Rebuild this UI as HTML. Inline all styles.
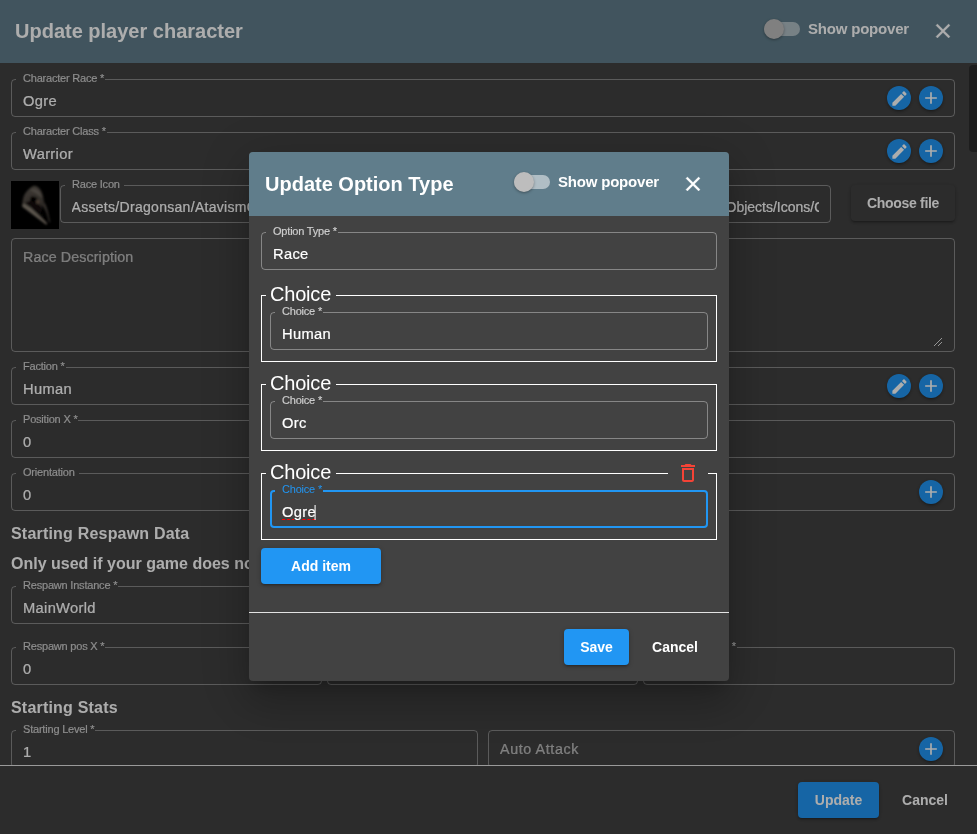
<!DOCTYPE html>
<html lang="en">
<head>
<meta charset="utf-8">
<title>Update player character</title>
<style>
*{box-sizing:border-box;margin:0;padding:0}
html,body{width:977px;height:834px;overflow:hidden;background:#424242;font-family:"Liberation Sans",sans-serif;color:#fff}
#dlg{will-change:transform;position:absolute;left:0;top:0;width:977px;height:834px;background:#424242;overflow:hidden}
.hdr{position:absolute;left:0;top:0;width:977px;height:63px;background:#607d8b}
.title{position:absolute;left:15px;top:0;height:63px;line-height:63px;font-size:20px;font-weight:bold;white-space:nowrap}
.tog{position:absolute;width:36px;height:14px;border-radius:7px;background:rgba(255,255,255,.5)}
.tog i{position:absolute;left:0;top:-3px;width:20px;height:20px;border-radius:50%;background:#bdbdbd;box-shadow:0 1px 3px rgba(0,0,0,.35)}
.toglbl{position:absolute;font-size:15px;font-weight:bold;white-space:nowrap;letter-spacing:-.2px;line-height:20px}
.x{position:absolute;width:24px;height:24px}
.x svg{display:block}
/* outlined field */
.f{position:absolute;height:38px;border:1px solid rgba(255,255,255,.36);border-radius:4px}
.f>label{-webkit-text-stroke:.15px;position:absolute;left:4px;top:-9px;letter-spacing:-.2px;height:14px;line-height:14px;padding:0 1px 0 7px;background:#424242;font-size:11px;color:rgba(255,255,255,.7);white-space:nowrap}
.f>span{position:absolute;left:11px;top:11px;line-height:20px;font-size:14px;white-space:nowrap;-webkit-text-stroke:.2px;letter-spacing:.3px;transform:scaleX(1.05);transform-origin:0 50%}
.f>span.clip{transform:none}
.f>span.ph{color:rgba(255,255,255,.6);letter-spacing:.1px;transform:scaleX(1.02)}
.f>label.o{padding-right:4px}
.rb{position:absolute;width:24px;height:24px;border-radius:50%;background:#2196f3;box-shadow:0 1px 5px rgba(0,0,0,.2),0 2px 2px rgba(0,0,0,.14),0 3px 1px -2px rgba(0,0,0,.12)}
.rb svg{display:block;margin:2px}
.h{position:absolute;left:11px;font-size:16px;font-weight:bold;white-space:nowrap;line-height:20px;letter-spacing:.2px}
.btn{position:absolute;height:36px;border-radius:4px;font-size:14px;font-weight:bold;line-height:36px;text-align:center;white-space:nowrap}
.btn.p{background:#2196f3;box-shadow:0 1px 5px rgba(0,0,0,.2),0 2px 2px rgba(0,0,0,.14),0 3px 1px -2px rgba(0,0,0,.12)}
.sep{position:absolute;height:1px;background:rgba(255,255,255,.85)}
#scrim{position:absolute;left:0;top:0;width:977px;height:834px;background:rgba(0,0,0,.32)}
#modal{will-change:transform;position:absolute;left:249px;top:152px;width:480px;height:529px;background:#424242;border-radius:4px;overflow:hidden;box-shadow:0 11px 15px -7px rgba(0,0,0,.2),0 24px 38px 3px rgba(0,0,0,.14),0 9px 46px 8px rgba(0,0,0,.12)}
#modal .hdr{width:480px;height:64px}
#modal .title{left:16px;height:64px;line-height:65px}
.grp{position:absolute;left:12px;width:456px;height:67px;border:1px solid #fff}
.grp>b{position:absolute;left:4px;top:-15px;height:26px;line-height:26px;padding:0 5px 0 4px;background:#424242;font-size:20px;font-weight:normal;letter-spacing:-.2px}
.grp .f{left:8px;top:16px;width:438px}
.f.foc{border:2px solid #2196f3}
.f.foc>label{-webkit-text-stroke:0;color:#2196f3;left:3px;top:-10px}
.f.foc>span{left:10px;top:10px}

.ico{position:absolute;width:48px;height:48px;background:#000;overflow:hidden}
.clip{overflow:hidden;right:11px;text-overflow:clip}
.btn.cf{letter-spacing:-.3px;background:#424242;box-shadow:0 1px 5px rgba(0,0,0,.2),0 2px 2px rgba(0,0,0,.14),0 3px 1px -2px rgba(0,0,0,.12)}
.f.ta>span{top:8px}
.f.ta>em{position:absolute;right:12px;bottom:5px;width:9px;height:9px;background:linear-gradient(135deg,transparent 0 50%,#ddd 50% 58%,transparent 58% 75%,#ddd 75% 83%,transparent 83%)}
.sb{position:absolute;left:969px;top:65px;width:8px;height:87px;background:#2c2c2c;border-radius:4px 0 0 4px}
.del{position:absolute;width:40px;height:24px;padding:0 8px;background:#424242}
.del svg{display:block}
.f u{text-decoration:underline dashed #f00 1px;text-underline-offset:2px}
.caret{display:inline-block;width:1px;height:15px;background:#fff;vertical-align:-3px;margin-left:-1px}
#content{position:absolute;left:0;top:0;width:977px;height:765px;overflow:hidden}
</style>
</head>
<body>
<div id="dlg">
  <div class="hdr">
    <div class="title">Update player character</div>
    <div class="tog" style="left:764px;top:22px"><i></i></div>
    <div class="toglbl" style="left:808px;top:19px">Show popover</div>
    <div class="x" style="left:931px;top:19px"><svg width="24" height="24" viewBox="0 0 24 24"><path fill="#fff" stroke="#fff" stroke-width=".35" d="M19 6.41L17.59 5 12 10.59 6.41 5 5 6.41 10.59 12 5 17.59 6.41 19 12 13.41 17.59 19 19 17.59 13.41 12z"/></svg></div>
  </div>
  <div id="content">
    <div class="f" style="left:11px;top:79px;width:944px;"><label>Character Race *</label><span>Ogre</span></div>
    <div class="rb" style="left:887px;top:86px"><svg width="19" height="19" style="margin:2.500px" viewBox="0 0 24 24"><path fill="#fff" d="M3 17.25V21h3.75L17.81 9.94l-3.75-3.75L3 17.25zM20.71 7.04c.39-.39.39-1.02 0-1.41l-2.34-2.34c-.39-.39-1.02-.39-1.41 0l-1.83 1.83 3.75 3.75 1.83-1.83z"/></svg></div>
    <div class="rb" style="left:919px;top:86px"><svg width="20" height="20" viewBox="0 0 24 24"><path fill="#fff" d="M19 13h-6v6h-2v-6H5v-2h6V5h2v6h6v2z"/></svg></div>
    <div class="f" style="left:11px;top:132px;width:944px;"><label>Character Class *</label><span>Warrior</span></div>
    <div class="rb" style="left:887px;top:139px"><svg width="19" height="19" style="margin:2.500px" viewBox="0 0 24 24"><path fill="#fff" d="M3 17.25V21h3.75L17.81 9.94l-3.75-3.75L3 17.25zM20.71 7.04c.39-.39.39-1.02 0-1.41l-2.34-2.34c-.39-.39-1.02-.39-1.41 0l-1.83 1.83 3.75 3.75 1.83-1.83z"/></svg></div>
    <div class="rb" style="left:919px;top:139px"><svg width="20" height="20" viewBox="0 0 24 24"><path fill="#fff" d="M19 13h-6v6h-2v-6H5v-2h6V5h2v6h6v2z"/></svg></div>
    <div class="ico" style="left:11px;top:181px"><svg width="48" height="48" viewBox="0 0 48 48"><defs><linearGradient id="hg" x1="0" y1="0" x2="0.300" y2="1"><stop offset="0" stop-color="#5d5750"/><stop offset=".55" stop-color="#4a443d"/><stop offset="1" stop-color="#262320"/></linearGradient><filter id="bl" x="-20%" y="-20%" width="140%" height="140%"><feGaussianBlur stdDeviation=".8"/></filter></defs><rect width="48" height="48" fill="#000"/><g filter="url(#bl)"><path d="M22.800 4.700C20 5.500 16 9.500 13.800 13 12 16 11.300 21 11.100 25.600L35.300 43.800 36.200 42.500 29 31 33 21.400C32.500 16 31.500 12 30 9.500 28 6 25.500 4.500 22.800 4.700z" fill="url(#hg)"/><path d="M14 22L20 19 28 23 31 27 30 33z" fill="#14110f"/><path d="M15 24L29 31 36 42.500 24 33z" fill="#0b0a09"/><path d="M11.100 25.600L12.200 22.600 20 27 36.200 42.500 35.300 43.800z" fill="#8a8175"/><path d="M19 9C22 6.500 27 7.500 30 13L31 17 26 13z" fill="#6d665e"/><ellipse cx="22.800" cy="18.300" rx="3.800" ry="2.700" fill="#050403" transform="rotate(25 22.800 18.300)"/><ellipse cx="26.800" cy="20.700" rx="1.600" ry="2.200" fill="#6b5648" transform="rotate(-20 26.800 20.700)"/><path d="M32.500 20.500C35.500 23 37 30 39.300 41.600L38 41.300C36.500 34 35 29.500 32 25.500z" fill="#4d4741"/></g></svg></div>
    <div class="f" style="left:60px;top:185px;width:771px"><label class="o">Race Icon</label><span class="clip" style="left:10.500px">Assets/Dragonsan/AtavismObjects/Races/Ogre/Resources/</span><span class="clip" style="left:664.500px;letter-spacing:0">Objects/Icons/Ogre.png</span></div>
    <div class="btn cf" style="left:851px;top:185px;width:104px">Choose file</div>
    <div class="f ta" style="left:11px;top:238px;width:944px;height:114px"><span class="ph">Race Description</span><em></em></div>
    <div class="f" style="left:11px;top:367px;width:944px;"><label>Faction *</label><span>Human</span></div>
    <div class="rb" style="left:887px;top:374px"><svg width="19" height="19" style="margin:2.500px" viewBox="0 0 24 24"><path fill="#fff" d="M3 17.25V21h3.75L17.81 9.94l-3.75-3.75L3 17.25zM20.71 7.04c.39-.39.39-1.02 0-1.41l-2.34-2.34c-.39-.39-1.02-.39-1.41 0l-1.83 1.83 3.75 3.75 1.83-1.83z"/></svg></div>
    <div class="rb" style="left:919px;top:374px"><svg width="20" height="20" viewBox="0 0 24 24"><path fill="#fff" d="M19 13h-6v6h-2v-6H5v-2h6V5h2v6h6v2z"/></svg></div>
    <div class="f" style="left:11px;top:420px;width:311px;"><label>Position X *</label><span>0</span></div>
    <div class="f" style="left:327px;top:420px;width:311px;"><label>Position Y *</label><span>0</span></div>
    <div class="f" style="left:643px;top:420px;width:312px;"><label>Position Z *</label><span>0</span></div>
    <div class="f" style="left:11px;top:473px;width:467px;"><label class=o>Orientation</label><span>0</span></div>
    <div class="f" style="left:488px;top:473px;width:467px;"><label>Starting Instance *</label><span>MainWorld</span></div>
    <div class="rb" style="left:919px;top:480px"><svg width="20" height="20" viewBox="0 0 24 24"><path fill="#fff" d="M19 13h-6v6h-2v-6H5v-2h6V5h2v6h6v2z"/></svg></div>
    <div class="h" style="top:524px">Starting Respawn Data</div>
    <div class="h" style="top:554px;letter-spacing:0">Only used if your game does not use the Atavism instance system</div>
    <div class="f" style="left:11px;top:586px;width:467px;"><label>Respawn Instance *</label><span>MainWorld</span></div>
    <div class="f" style="left:11px;top:647px;width:311px;"><label>Respawn pos X *</label><span>0</span></div>
    <div class="f" style="left:327px;top:647px;width:311px;"><label>Respawn pos Y *</label><span>0</span></div>
    <div class="f" style="left:643px;top:647px;width:312px;"><label>Respawn pos Z *</label><span>0</span></div>
    <div class="h" style="top:698px">Starting Stats</div>
    <div class="f" style="left:11px;top:730px;width:467px;"><label>Starting Level *</label><span>1</span></div>
    <div class="f" style="left:488px;top:730px;width:467px;"><span class=ph style="top:8px;letter-spacing:.6px">Auto Attack</span></div>
    <div class="rb" style="left:919px;top:737px"><svg width="20" height="20" viewBox="0 0 24 24"><path fill="#fff" d="M19 13h-6v6h-2v-6H5v-2h6V5h2v6h6v2z"/></svg></div>
    <div class="sb"></div>
  </div><!--/c-->
  <div class="sep" style="left:0;top:765px;width:977px"></div>
  <div class="btn p" style="left:798px;top:782px;width:81px">Update</div>
  <div class="btn" style="left:887px;top:782px;width:76px">Cancel</div>
</div>
<div id="scrim"></div>
<div id="modal">
  <div class="hdr">
    <div class="title">Update Option Type</div>
    <div class="tog" style="left:265px;top:23px"><i></i></div>
    <div class="toglbl" style="left:309px;top:20px">Show popover</div>
    <div class="x" style="left:432px;top:20px"><svg width="24" height="24" viewBox="0 0 24 24"><path fill="#fff" stroke="#fff" stroke-width=".35" d="M19 6.41L17.59 5 12 10.59 6.41 5 5 6.41 10.59 12 5 17.59 6.41 19 12 13.41 17.59 19 19 17.59 13.41 12z"/></svg></div>
  </div>
  <div id="mcontent">
    <div class="f" style="left:12px;top:80px;width:456px;"><label>Option Type *</label><span>Race</span></div>
    <div class="grp" style="top:143px"><b>Choice</b><div class="f"><label>Choice *</label><span>Human</span></div></div>
    <div class="grp" style="top:232px"><b>Choice</b><div class="f"><label>Choice *</label><span>Orc</span></div></div>
    <div class="grp" style="top:321px"><b>Choice</b><div class="f foc"><label>Choice *</label><span><u>Ogre</u><i class="caret"></i></span></div></div>
    <div class="del" style="left:419px;top:308.600px"><svg width="24" height="24" viewBox="0 0 24 24"><path fill="#f44336" d="M6 19c0 1.1.9 2 2 2h8c1.1 0 2-.9 2-2V7H6v12zM8 9h8v10H8V9zm7.500-5l-1-1h-5l-1 1H5v2h14V4h-3.500z"/></svg></div>
    <div class="btn p" style="left:12px;top:396px;width:120px">Add item</div>
    <div class="sep" style="left:0;top:460px;width:480px"></div>
    <div class="btn p" style="left:315px;top:477px;width:65px">Save</div>
    <div class="btn" style="left:388px;top:477px;width:76px">Cancel</div>
  </div><!--/m-->
</div>
</body>
</html>
